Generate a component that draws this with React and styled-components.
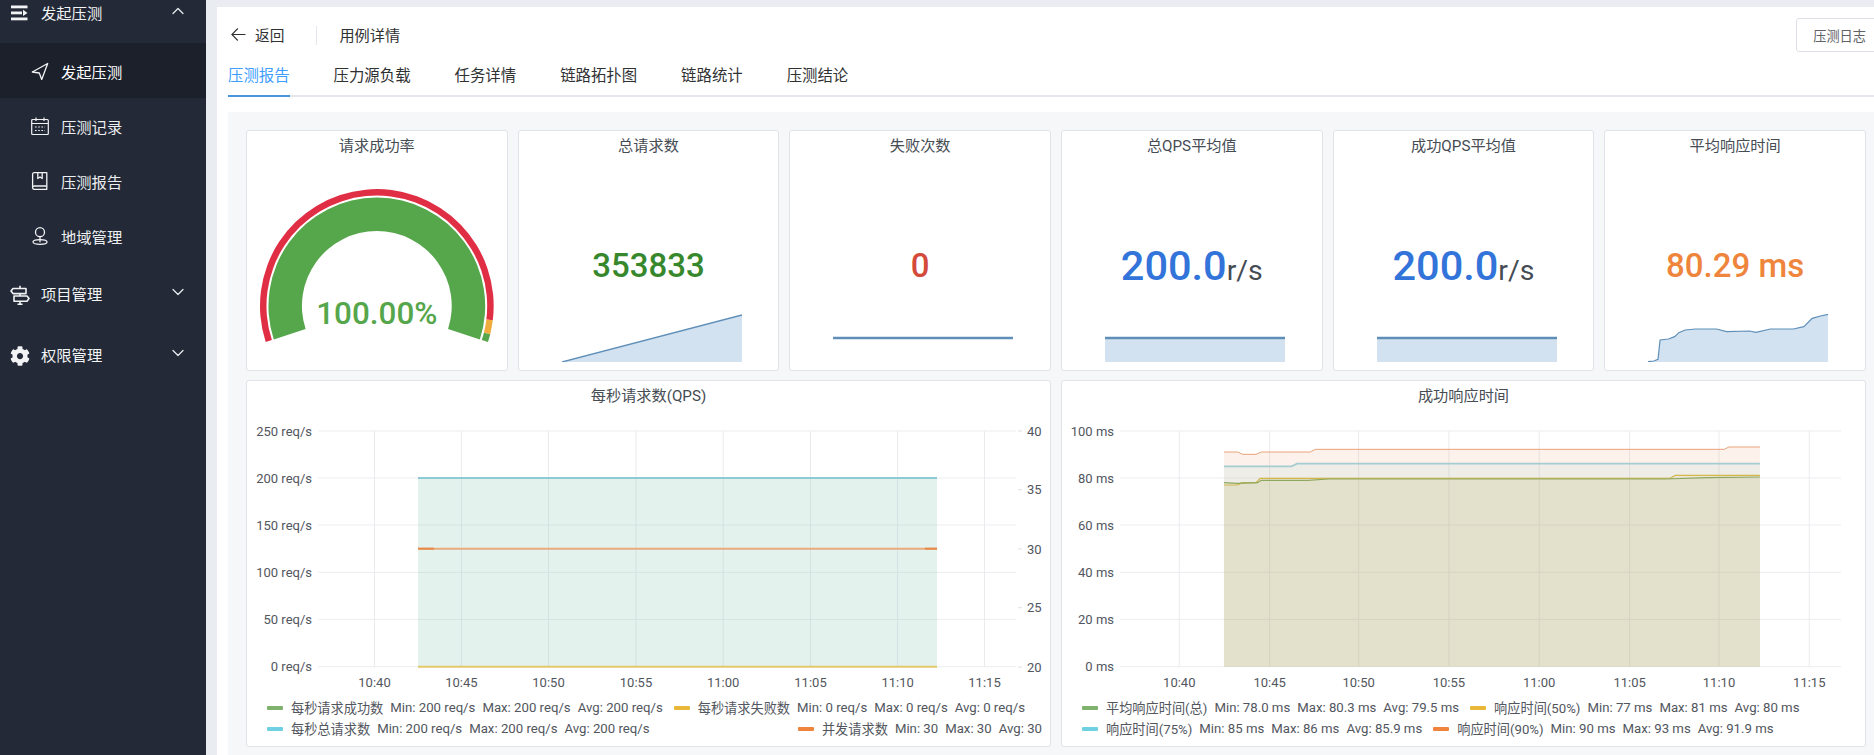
import { createGlobalStyle, styled } from "styled-components"
import { ChevronDown, ChevronUp } from "lucide-react"
import { FaCog } from "react-icons/fa"

const GlobalStyle = createGlobalStyle`
  html, body {
    margin: 0;
    padding: 0;
    height: 100%;
    overflow: hidden;
    font-family: Roboto, "Noto Sans CJK SC", sans-serif;
  }
  * {
    box-sizing: border-box;
  }
`

const Page = styled.div`
  display: flex;
  width: 100vw;
  height: 100vh;
  overflow: hidden;
  background: #e9edf2;
`
const Sidebar = styled.nav`
  flex: 0 0 206px;
  display: flex;
  flex-direction: column;
  background: #232936;
  overflow: hidden;
`
const NavList = styled.div`
  margin-top: -18px;
`
const NavParent = styled.div`
  display: flex;
  align-items: center;
  height: 61px;
  padding: 0 18px 2px 10px;
  color: #f2f3f5;
  font-size: 15.3px;
`
const NavIcon = styled.span`
  display: flex;
  flex: 0 0 ${(p) => (p.$sub ? "18px" : "20px")};
  margin-right: ${(p) => (p.$sub ? "12px" : "11px")};
  margin-top: ${(p) => (p.$sub ? "0" : "4px")};
  color: #f2f3f5;
`
const NavChevron = styled.span`
  display: flex;
  margin: -2px 0 0 auto;
  color: #e8eaee;
`
const NavSub = styled.div`
  display: flex;
  align-items: center;
  height: 55px;
  padding-left: 31px;
  color: ${(p) => (p.$active ? "#ffffff" : "#eceef1")};
  background: ${(p) => (p.$active ? "#1b202b" : "transparent")};
  font-size: 15.3px;
`

const Main = styled.main`
  flex: 1;
  min-width: 0;
  margin: 7px 0 0 11px;
  padding-left: 11px;
  background: #ffffff;
  overflow: hidden;
`
const HeaderRow = styled.header`
  display: flex;
  align-items: center;
  height: 34px;
  margin: 11px -9px 0 0;
  color: #303133;
`
const BackLink = styled.span`
  display: flex;
  align-items: center;
  gap: 9px;
  margin-top: -2px;
  padding-left: 3px;
  font-size: 14.7px;
`
const Divider = styled.span`
  width: 1px;
  height: 19px;
  margin: 0 22px 0 32px;
  background: #e4e7ed;
`
const PageTitle = styled.span`
  margin-top: -2px;
  font-size: 15.2px;
`
const LogButton = styled.button`
  height: 34px;
  margin-left: auto;
  padding: 0 16px;
  border: 1px solid #dcdfe6;
  border-radius: 3px;
  background: #ffffff;
  color: #606266;
  font-family: inherit;
  font-size: 13.2px;
`
const Tabs = styled.div`
  display: flex;
  gap: 44px;
  height: 42px;
  margin-top: 3px;
  border-bottom: 2px solid #e4e7ed;
`
const Tab = styled.div`
  height: 42px;
  line-height: 42px;
  border-bottom: 2px solid ${(p) => (p.$active ? "#4a96dc" : "transparent")};
  color: ${(p) => (p.$active ? "#409eff" : "#303133")};
  font-size: 15.4px;
`
const Board = styled.section`
  display: grid;
  grid-template-columns: repeat(6, 1fr);
  grid-template-rows: 241px 367px;
  gap: 9px 10px;
  height: 643px;
  margin-top: 15px;
  padding: 18px 8px 8px 18px;
  background: #f5f7f9;
`
const Card = styled.div`
  grid-column: span ${(p) => p.$span || 1};
  display: flex;
  flex-direction: column;
  min-width: 0;
  border: 1px solid #e0e3e8;
  border-radius: 3px;
  background: #ffffff;
`
const CardTitle = styled.div`
  height: ${(p) => (p.$chart ? "32px" : "28px")};
  line-height: 30px;
  color: #464c54;
  font-size: 15.2px;
  text-align: center;
`
const StatValue = styled.div`
  display: flex;
  justify-content: center;
  align-items: baseline;
  height: 48px;
  margin-top: 83px;
  line-height: 48px;
  color: ${(p) => p.$color};
  font-size: ${(p) => p.$size || 33}px;
  font-weight: 500;
  white-space: nowrap;
`
const StatUnit = styled.span`
  color: #464c54;
  font-size: 28.5px;
  font-weight: 400;
`
const Spark = styled.svg`
  display: block;
  flex: none;
  width: 180px;
  height: 48px;
  margin: 24px 0 0 43px;
`
const GaugeBox = styled.svg`
  display: block;
  width: 100%;
  height: 211px;
`
const GaugeText = styled.text`
  fill: #56a64b;
  font-size: 31.5px;
  font-weight: 500;
  text-anchor: middle;
`
const ChartBox = styled.svg`
  display: block;
  flex: none;
  width: 803px;
  height: 280px;
`
const AxisText = styled.text`
  fill: #52565e;
  font-size: 13px;
  text-anchor: ${(p) => p.$anchor || "middle"};
`
const Legend = styled.div`
  display: flex;
  flex-wrap: wrap;
  column-gap: 11px;
  margin-top: 4px;
  padding: 0 8px 0 20px;
`
const LegendItem = styled.div`
  display: flex;
  align-items: center;
  gap: 7px;
  height: 21px;
  margin-left: ${(p) => (p.$right ? "auto" : "0")};
  color: #52565e;
  font-size: 13.2px;
  white-space: nowrap;
`
const Swatch = styled.i`
  width: 16px;
  height: 4px;
  margin-right: 1px;
  border-radius: 1px;
  background: ${(p) => p.$color};
`

const GREEN = "#7eb26d"
const YELLOW = "#eab839"
const TEAL = "#6ed0e0"
const ORANGE = "#ef843c"

const times = ["10:40", "10:45", "10:50", "10:55", "11:00", "11:05", "11:10", "11:15"]
const plotYs = [431, 478, 525, 572.3, 619.4, 666.7]

const qpsLegend = [
  { color: GREEN, name: "每秒请求成功数", stats: ["Min: 200 req/s", "Max: 200 req/s", "Avg: 200 req/s"] },
  { color: YELLOW, name: "每秒请求失败数", stats: ["Min: 0 req/s", "Max: 0 req/s", "Avg: 0 req/s"] },
  { color: TEAL, name: "每秒总请求数", stats: ["Min: 200 req/s", "Max: 200 req/s", "Avg: 200 req/s"] },
  { color: ORANGE, name: "并发请求数", stats: ["Min: 30", "Max: 30", "Avg: 30"], right: true },
]
const latencyLegend = [
  { color: GREEN, name: "平均响应时间(总)", stats: ["Min: 78.0 ms", "Max: 80.3 ms", "Avg: 79.5 ms"] },
  { color: YELLOW, name: "响应时间(50%)", stats: ["Min: 77 ms", "Max: 81 ms", "Avg: 80 ms"] },
  { color: TEAL, name: "响应时间(75%)", stats: ["Min: 85 ms", "Max: 86 ms", "Avg: 85.9 ms"] },
  { color: ORANGE, name: "响应时间(90%)", stats: ["Min: 90 ms", "Max: 93 ms", "Avg: 91.9 ms"] },
]

// points read off the reference, in zoomed crop units
const toLatency = (list) => list.map(([x, y]) => [1050 + x / 1.903, 375 + y / 3])
const p90 = toLatency([[331, 231], [357, 231], [367, 238], [392, 238], [402, 231], [495, 231], [505, 223], [1283, 223], [1292, 216], [1351, 216]])
const p75 = toLatency([[331, 274], [460, 274], [470, 266], [1351, 266]])
const p50 = toLatency([[331, 330], [357, 330], [365, 323], [392, 323], [400, 310], [1180, 310], [1190, 301], [1351, 301]])
const pAvg = toLatency([[331, 323], [357, 325], [395, 323], [402, 316], [490, 316], [530, 312], [1170, 312], [1250, 308], [1351, 306]])

const sparkLatency = [[1026, 1085], [1040, 1083], [1050, 1078], [1055, 1020], [1075, 1017], [1090, 1010], [1100, 998], [1115, 990], [1140, 987], [1190, 987], [1215, 995], [1270, 993], [1285, 997], [1320, 987], [1375, 987], [1400, 980], [1420, 955], [1440, 948], [1458, 943]]
  .map(([x, y]) => [(x - 1026) / 2.4, (y - 942) / 3])

const line = (pts) => pts.map((p) => p.join(",")).join(" ")
const area = (pts, base) => `${pts[0][0]},${base} ${line(pts)} ${pts[pts.length - 1][0]},${base}`

function polar(cx, cy, r, deg) {
  const a = (deg * Math.PI) / 180
  return `${(cx + r * Math.cos(a)).toFixed(2)} ${(cy + r * Math.sin(a)).toFixed(2)}`
}
function ringPath(r0, r1, from, to) {
  const cx = 377
  const cy = 306
  const big = to - from > 180 ? 1 : 0
  return `M${polar(cx, cy, r1, from)} A${r1} ${r1} 0 ${big} 1 ${polar(cx, cy, r1, to)} L${polar(cx, cy, r0, to)} A${r0} ${r0} 0 ${big} 0 ${polar(cx, cy, r0, from)} Z`
}

function MenuIcon() {
  return (
    <svg width="20" height="20" viewBox="0 0 20 20" fill="currentColor">
      <rect x="1" y="1.5" width="16.5" height="2.8" />
      <rect x="1" y="7.5" width="11" height="2.8" />
      <path d="M13 5.8 L17.5 8.9 L13 12 Z" />
      <rect x="1" y="13.5" width="16.5" height="2.8" />
    </svg>
  )
}
function SendIcon() {
  return (
    <svg width="18" height="18" viewBox="0 0 18 18" fill="none" stroke="currentColor" strokeWidth="1.3" strokeLinejoin="round">
      <path d="M16.7 1.5 L1.3 10 L8.3 11 L10.7 17.5 Z" />
    </svg>
  )
}
function CalendarIcon() {
  return (
    <svg width="18" height="18" viewBox="0 0 18 18" fill="none" stroke="currentColor" strokeWidth="1.2">
      <rect x="0.7" y="2.5" width="16.6" height="15" rx="1" />
      <path d="M0.7 6.5 H17.3 M5 0.5 V4 M13 0.5 V4" />
      <path d="M4 10 H14 M4 13.5 H14" strokeDasharray="1.6 1.6" />
    </svg>
  )
}
function BookIcon() {
  return (
    <svg width="18" height="18" viewBox="0 0 18 18" fill="none" stroke="currentColor" strokeWidth="1.3" strokeLinejoin="round">
      <path d="M3.2 0.7 H15.8 V17.3 H3.2 Q1.6 17.3 1.6 15.5 V2.3 Q1.6 0.7 3.2 0.7 Z" />
      <path d="M1.6 15 Q1.6 14 3.2 14 H15.8" />
      <path d="M6.8 0.7 V6.5 L9 5 L11.2 6.5 V0.7" />
    </svg>
  )
}
function PinIcon() {
  return (
    <svg width="18" height="18" viewBox="0 0 18 18" fill="none" stroke="currentColor" strokeWidth="1.3">
      <circle cx="9" cy="5.2" r="4.5" />
      <path d="M9 9.7 V15.2" />
      <ellipse cx="9" cy="15" rx="7" ry="2.3" />
    </svg>
  )
}
function SignpostIcon() {
  return (
    <svg width="20" height="20" viewBox="0 0 20 20" fill="none" stroke="currentColor" strokeWidth="1.6" strokeLinejoin="round">
      <path d="M10 0.8 V3.5 M10 8.6 V11 M10 16.2 V19.2 M7.5 19.2 H12.5" />
      <path d="M3 3.5 H16 V8.6 H3 L1 6 Z" />
      <path d="M4 11 H17 L19 13.6 L17 16.2 H4 Z" />
    </svg>
  )
}
function BackArrow() {
  return (
    <svg width="15" height="15" viewBox="0 0 15 15" fill="none" stroke="currentColor" strokeWidth="1.1">
      <path d="M14.5 7.5 H1 M6.8 1.5 L0.9 7.5 L6.8 13.5" />
    </svg>
  )
}

function StatCard({ title, children, spark }) {
  return (
    <Card>
      <CardTitle>{title}</CardTitle>
      {children}
      <Spark viewBox="0 0 180 48">
        {spark.fill && <polygon points={area(spark.points, 48)} fill="#d3e2f0" />}
        <polyline points={line(spark.points)} fill="none" stroke="#5f8fb8" strokeWidth={spark.width || 1.6} />
      </Spark>
    </Card>
  )
}

function GaugeCard() {
  return (
    <Card>
      <CardTitle>请求成功率</CardTitle>
      <GaugeBox viewBox="247 159 260 211">
        <path d={ringPath(110.5, 117, 162, 367)} fill="#e02f44" />
        <path d={ringPath(110.5, 117, 367, 374)} fill="#f0ad3e" />
        <path d={ringPath(110.5, 117, 374, 378)} fill="#56a64b" />
        <path d={ringPath(75, 108.5, 162, 378)} fill="#56a64b" />
        <GaugeText x="377" y="324">100.00%</GaugeText>
      </GaugeBox>
    </Card>
  )
}

function ChartCard({ title, left, xs, plotLeft, plotRight, labelRight, yLabels, rightAxis, legend, children }) {
  return (
    <Card $span={3}>
      <CardTitle $chart>{title}</CardTitle>
      <ChartBox viewBox={`${left} 413 803 280`}>
        {plotYs.map((y) => (
          <line key={y} x1={plotLeft} x2={plotRight} y1={y} y2={y} stroke="#ebedf0" />
        ))}
        {xs.map((x) => (
          <line key={x} x1={x} x2={x} y1="431" y2="666.7" stroke="#e9ebee" />
        ))}
        {children}
        {yLabels.map((t, i) => (
          <AxisText key={t} x={labelRight} y={plotYs[i] + 4.5} $anchor="end">{t}</AxisText>
        ))}
        {xs.map((x, i) => (
          <AxisText key={times[i]} x={x} y="687">{times[i]}</AxisText>
        ))}
        {rightAxis && rightAxis.map(([t, y]) => (
          <g key={t}>
            <line x1="1018" x2="1022" y1={y} y2={y} stroke="#dfe1e5" />
            <AxisText x="1027" y={y + 4.5} $anchor="start">{t}</AxisText>
          </g>
        ))}
      </ChartBox>
      <Legend>
        {legend.map((item) => (
          <LegendItem key={item.name} $right={item.right}>
            <Swatch $color={item.color} />
            <span>{item.name}</span>
            {item.stats.map((s) => (
              <span key={s}>{s}</span>
            ))}
          </LegendItem>
        ))}
      </Legend>
    </Card>
  )
}

function App() {
  const rising = { points: [[0, 48], [180, 1]], fill: true, width: 1.4 }
  const flat = { points: [[0, 24], [180, 24]], width: 2.4 }
  const flatFill = { points: [[0, 24], [180, 24]], fill: true, width: 2.4 }
  const responseSpark = { points: sparkLatency, fill: true, width: 1.2 }

  return (
    <>
      <GlobalStyle />
      <Page>
        <Sidebar>
          <NavList>
            <NavParent>
              <NavIcon><MenuIcon /></NavIcon>
              发起压测
              <NavChevron><ChevronUp size={20} strokeWidth={1.5} /></NavChevron>
            </NavParent>
            <NavSub $active>
              <NavIcon $sub><SendIcon /></NavIcon>
              发起压测
            </NavSub>
            <NavSub>
              <NavIcon $sub><CalendarIcon /></NavIcon>
              压测记录
            </NavSub>
            <NavSub>
              <NavIcon $sub><BookIcon /></NavIcon>
              压测报告
            </NavSub>
            <NavSub>
              <NavIcon $sub><PinIcon /></NavIcon>
              地域管理
            </NavSub>
            <NavParent>
              <NavIcon><SignpostIcon /></NavIcon>
              项目管理
              <NavChevron><ChevronDown size={20} strokeWidth={1.5} /></NavChevron>
            </NavParent>
            <NavParent>
              <NavIcon><FaCog size={20} /></NavIcon>
              权限管理
              <NavChevron><ChevronDown size={20} strokeWidth={1.5} /></NavChevron>
            </NavParent>
          </NavList>
        </Sidebar>
        <Main>
          <HeaderRow>
            <BackLink><BackArrow />返回</BackLink>
            <Divider />
            <PageTitle>用例详情</PageTitle>
            <LogButton>压测日志</LogButton>
          </HeaderRow>
          <Tabs>
            <Tab $active>压测报告</Tab>
            <Tab>压力源负载</Tab>
            <Tab>任务详情</Tab>
            <Tab>链路拓扑图</Tab>
            <Tab>链路统计</Tab>
            <Tab>压测结论</Tab>
          </Tabs>
          <Board>
            <GaugeCard />
            <StatCard title="总请求数" spark={rising}>
              <StatValue $color="#37872d">353833</StatValue>
            </StatCard>
            <StatCard title="失败次数" spark={flat}>
              <StatValue $color="#d44a3a">0</StatValue>
            </StatCard>
            <StatCard title="总QPS平均值" spark={flatFill}>
              <StatValue $color="#3274d9" $size={41.5}>200.0<StatUnit>r/s</StatUnit></StatValue>
            </StatCard>
            <StatCard title="成功QPS平均值" spark={flatFill}>
              <StatValue $color="#3274d9" $size={41.5}>200.0<StatUnit>r/s</StatUnit></StatValue>
            </StatCard>
            <StatCard title="平均响应时间" spark={responseSpark}>
              <StatValue $color="#ef843c">80.29 ms</StatValue>
            </StatCard>
            <ChartCard
              title="每秒请求数(QPS)"
              left={247}
              xs={[374.5, 461.4, 548.5, 636, 723.2, 810.5, 897.6, 984.5]}
              plotLeft={318.4}
              plotRight={1016}
              labelRight={312}
              yLabels={["250 req/s", "200 req/s", "150 req/s", "100 req/s", "50 req/s", "0 req/s"]}
              rightAxis={[["40", 431], ["35", 489.7], ["30", 549], ["25", 607.7], ["20", 667]]}
              legend={qpsLegend}
            >
              <rect x="418" y="478" width="519" height="188.7" fill="#7eb26d" fillOpacity="0.1" />
              <rect x="418" y="478" width="519" height="188.7" fill="#6ed0e0" fillOpacity="0.1" />
              <line x1="418" x2="937" y1="478" y2="478" stroke="#8ccbd3" strokeWidth="2" />
              <line x1="418" x2="937" y1="548.7" y2="548.7" stroke="#e9ab7c" strokeWidth="2" />
              <line x1="418" x2="434" y1="548.7" y2="548.7" stroke="#e58a4a" strokeWidth="2" />
              <line x1="925" x2="937" y1="548.7" y2="548.7" stroke="#e58a4a" strokeWidth="2" />
              <line x1="418" x2="937" y1="666.7" y2="666.7" stroke="#e3c96c" strokeWidth="2" />
            </ChartCard>
            <ChartCard
              title="成功响应时间"
              left={1062}
              xs={[1179.3, 1269.6, 1358.6, 1448.9, 1539.2, 1629.6, 1719, 1809.3]}
              plotLeft={1120}
              plotRight={1841}
              labelRight={1114}
              yLabels={["100 ms", "80 ms", "60 ms", "40 ms", "20 ms", "0 ms"]}
              legend={latencyLegend}
            >
              <polygon points={area(pAvg, 666.7)} fill={GREEN} fillOpacity="0.1" />
              <polygon points={area(p50, 666.7)} fill={YELLOW} fillOpacity="0.1" />
              <polygon points={area(p75, 666.7)} fill={TEAL} fillOpacity="0.1" />
              <polygon points={area(p90, 666.7)} fill={ORANGE} fillOpacity="0.1" />
              <polyline points={line(p90)} fill="none" stroke="#e9a27a" strokeWidth="1" />
              <polyline points={line(p75)} fill="none" stroke="#a5ccd1" strokeWidth="1.6" />
              <polyline points={line(p50)} fill="none" stroke="#d4b84a" strokeWidth="1.2" />
              <polyline points={line(pAvg)} fill="none" stroke="#8ea75f" strokeWidth="1.2" />
            </ChartCard>
          </Board>
        </Main>
      </Page>
    </>
  )
}

export default App
